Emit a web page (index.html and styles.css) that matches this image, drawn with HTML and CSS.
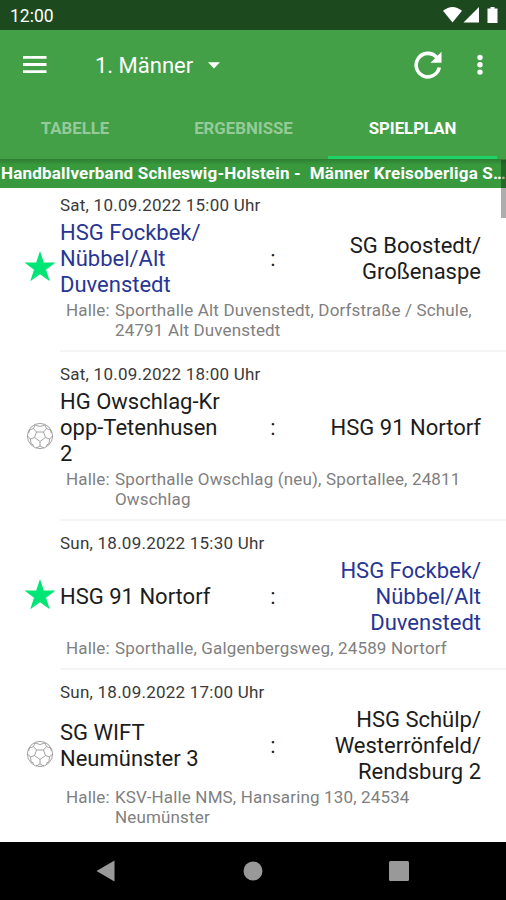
FILE: index.html
```html
<!DOCTYPE html>
<html lang="de">
<head>
  <meta charset="UTF-8" />
  <meta name="viewport" content="width=device-width, initial-scale=1.0"/>
  <title>Spielplan</title>
  <link rel="stylesheet" href="styles.css">
</head>
<body>

  <svg class="defs" width="0" height="0">
    <symbol id="star" viewBox="0 0 32 32">
      <path fill="#00e676" d="M16 0l3.800 11.500H31.500l-9.500 7.200 3.800 11.500L16 23.200 6.200 30.200 10 18.700.5 11.500h11.700z"/>
    </symbol>
    <symbol id="ball" viewBox="0 0 28 28">
      <g fill="none" stroke="#8c8c8c" stroke-width=".8">
        <circle cx="14" cy="14" r="12.600"/>
        <path d="M10.500 10h7l2 5.500-5.500 4-5.500-4zM10.500 10L7.500 6.500 9 3M17.500 10l3-3.500L19 3M8.500 15.500l-4 1.500-3-3M19.500 15.500l4 1.500 3-3M14 19.500V24l-4 2M14 24l4 2M7.500 6.500L3.500 8l-.8 3M20.500 6.500l4 1.500.8 3M4.500 17l.5 4.500 3 2M23.500 17l-.5 4.500-3 2M9 3l5 1.500L19 3"/>
      </g>
    </symbol>
  </svg>

  <div class="statusbar">
    <span class="clock">12:00</span>
    <svg width="56" height="18" viewBox="0 0 56 18" fill="#fff">
      <path d="M1 4.800Q10.500-3 20 4.800L10.500 16.500z"/>
      <path d="M37 1v15.500H21.500z"/>
      <path d="M48.500 1h4v1.500H55.500V17H45.500V2.500h3z"/>
    </svg>
  </div>

  <header>
    <div class="toolbar">
      <svg class="menu" width="24" height="18" viewBox="0 0 24 18" fill="#fff">
        <path d="M0 0h23.500v2.800H0zM0 7.100h23.500v2.800H0zM0 14.200h23.500V17H0z"/>
      </svg>
      <span class="title">1. Männer</span>
      <svg class="caret" width="12" height="7" viewBox="0 0 12 7"><path fill="#fff" d="M0 .3h12L6 6.500z"/></svg>
      <svg class="refresh" width="28" height="28" viewBox="0 0 28 28">
        <path fill="none" stroke="#fff" stroke-width="3.600" d="M22.500 6.200A11.700 11.700 0 1 0 25.300 16.500"/>
        <path fill="#fff" d="M27.500.8v11H16.500z"/>
      </svg>
      <svg class="more" width="6" height="22" viewBox="0 0 6 22" fill="#fff">
        <circle cx="3" cy="3.500" r="2.700"/><circle cx="3" cy="10.800" r="2.700"/><circle cx="3" cy="18.100" r="2.700"/>
      </svg>
    </div>
    <nav class="tabs">
      <span class="tab">TABELLE</span>
      <span class="tab">ERGEBNISSE</span>
      <span class="tab active">SPIELPLAN</span>
    </nav>
    <div class="league">Handballverband Schleswig-Holstein -&nbsp; Männer Kreisoberliga S…</div>
    <div class="scrollbar"></div>
  </header>

  <main>
    <div class="game">
      <svg class="icon" width="32" height="32"><use href="#star"/></svg>
      <div class="info">
        <div class="date">Sat, 10.09.2022 15:00 Uhr</div>
        <div class="teams">
          <div class="team own">HSG Fockbek/<br>Nübbel/Alt<br>Duvenstedt</div>
          <div class="colon">:</div>
          <div class="team guest">SG Boostedt/<br>Großenaspe</div>
        </div>
        <div class="hall"><span>Halle:</span><span>Sporthalle Alt Duvenstedt, Dorfstraße / Schule,<br>24791 Alt Duvenstedt</span></div>
      </div>
    </div>
    <div class="game">
      <svg class="icon" width="28" height="28"><use href="#ball"/></svg>
      <div class="info">
        <div class="date">Sat, 10.09.2022 18:00 Uhr</div>
        <div class="teams">
          <div class="team">HG Owschlag-Kr<br>opp-Tetenhusen<br>2</div>
          <div class="colon">:</div>
          <div class="team guest">HSG 91 Nortorf</div>
        </div>
        <div class="hall"><span>Halle:</span><span>Sporthalle Owschlag (neu), Sportallee, 24811<br>Owschlag</span></div>
      </div>
    </div>
    <div class="game">
      <svg class="icon" width="32" height="32"><use href="#star"/></svg>
      <div class="info">
        <div class="date">Sun, 18.09.2022 15:30 Uhr</div>
        <div class="teams">
          <div class="team">HSG 91 Nortorf</div>
          <div class="colon">:</div>
          <div class="team guest own">HSG Fockbek/<br>Nübbel/Alt<br>Duvenstedt</div>
        </div>
        <div class="hall"><span>Halle:</span><span>Sporthalle, Galgenbergsweg, 24589 Nortorf</span></div>
      </div>
    </div>
    <div class="game">
      <svg class="icon" width="28" height="28"><use href="#ball"/></svg>
      <div class="info">
        <div class="date">Sun, 18.09.2022 17:00 Uhr</div>
        <div class="teams">
          <div class="team">SG WIFT<br>Neumünster 3</div>
          <div class="colon">:</div>
          <div class="team guest">HSG Schülp/<br>Westerrönfeld/<br>Rendsburg 2</div>
        </div>
        <div class="hall"><span>Halle:</span><span>KSV-Halle NMS, Hansaring 130, 24534<br>Neumünster</span></div>
      </div>
    </div>
  </main>

  <footer class="navbar">
    <svg width="20" height="22" viewBox="0 0 20 22"><path fill="#999" d="M18.500.5v21L.5 11z"/></svg>
    <svg width="20" height="20" viewBox="0 0 20 20"><circle fill="#999" cx="10" cy="10" r="9.500"/></svg>
    <svg width="20" height="20" viewBox="0 0 20 20"><rect fill="#999" width="20" height="20" rx="1.500"/></svg>
  </footer>

</body>
</html>
```
FILE: styles.css
```css
* { box-sizing: border-box; }
body {
  font-family: Roboto, sans-serif;
  margin: 0;
  height: 900px;
  display: flex;
  flex-direction: column;
  overflow: hidden;
  background: #fff;
}
svg { display: block; flex: none; }
.defs { position: absolute; }

.statusbar {
  height: 30px;
  flex: none;
  display: flex;
  align-items: center;
  justify-content: space-between;
  padding: 0 8px 0 10px;
  background: #1c4a1e;
  color: #fff;
}
.clock { font-size: 17.5px; padding-top: 2px; }

header {
  position: relative;
  z-index: 1;
  flex: none;
  background: #43a047;
  color: #fff;
}
.toolbar {
  height: 70px;
  display: flex;
  align-items: center;
  padding: 0 23px;
}
.title {
  margin-left: 48px;
  width: 99px;
  font-size: 22px;
  white-space: nowrap;
}
.caret { margin-left: 14px; }
.refresh { margin-left: auto; }
.more { margin-left: 35px; }

.tabs {
  height: 59px;
  display: grid;
  grid-template-columns: 168px 169px 169px;
  margin-left: -9px;
}
.tab {
  display: flex;
  align-items: center;
  justify-content: center;
  font-size: 16.8px;
  font-weight: 700;
  color: #96ca98;
  border-bottom: 3px solid transparent;
}
.active { color: #fff; border-color: #1fd368; }

.league {
  height: 29px;
  padding-left: 1px;
  line-height: 29px;
  font-size: 17px;
  font-weight: 700;
  letter-spacing: .19px;
  white-space: nowrap;
  overflow: hidden;
  background: linear-gradient(#2e7d32, #389a3d 6px);
}
.scrollbar {
  position: absolute;
  right: 0;
  top: 130px;
  width: 5px;
  height: 58px;
  background: rgba(0,0,0,.32);
}

main {
  flex: 1;
  margin-top: -5px;
  overflow: hidden;
}
.game {
  display: grid;
  grid-template-columns: 40px 1fr;
  align-items: center;
  padding-left: 20px;
}
.icon { justify-self: center; margin-bottom: 1px; }
.info {
  padding: 12px 0 10px;
  border-bottom: 2px solid #f5f5f5;
}
.game:last-child .info { border-color: transparent; }
.date {
  line-height: 20px;
  font-size: 17px;
  letter-spacing: .23px;
  color: #3a3a3a;
}
.teams {
  display: grid;
  grid-template-columns: 180px 66px 175px;
  align-items: center;
  min-height: 78px;
  margin: 5px 0 2px;
  line-height: 26px;
  font-size: 22px;
  color: #1c1c1c;
}
.team { white-space: nowrap; }
.guest { text-align: right; }
.own { color: #283593; }
.colon { text-align: center; }
.hall {
  display: grid;
  grid-template-columns: 49px 1fr;
  padding-left: 6px;
  line-height: 20px;
  font-size: 17px;
  letter-spacing: .15px;
  color: #808080;
}

.navbar {
  height: 58px;
  flex: none;
  display: flex;
  align-items: center;
  justify-content: space-between;
  padding: 0 97px 0 96px;
  background: #000;
}
```
